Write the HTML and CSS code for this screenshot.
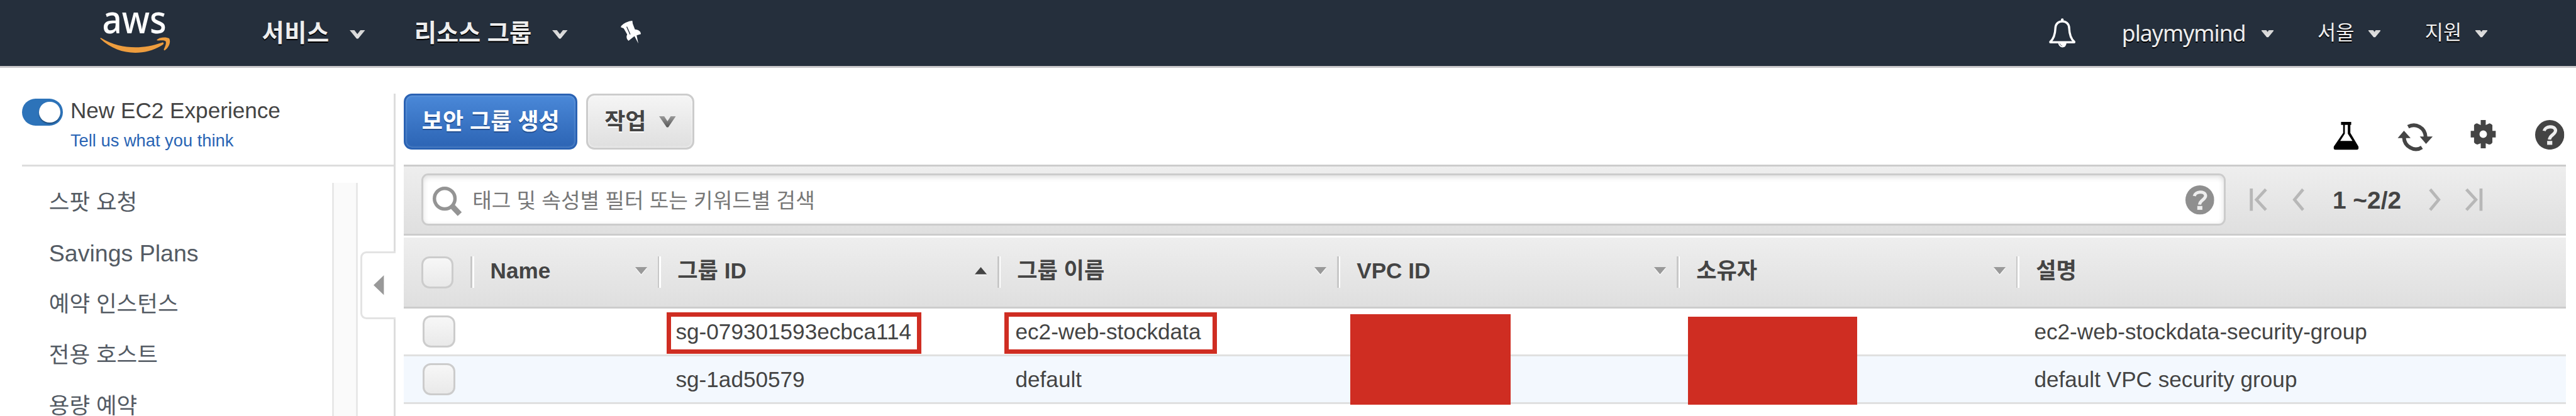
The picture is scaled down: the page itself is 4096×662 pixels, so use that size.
FILE: index.html
```html
<!DOCTYPE html>
<html lang="ko">
<head>
<meta charset="utf-8">
<title>EC2 보안 그룹</title>
<link rel="stylesheet" href="styles.css">
</head>
<body>
<svg class="defs" width="0" height="0" aria-hidden="true">
  <defs>
    <linearGradient id="caret-light" x1="0" y1="0" x2="0" y2="1"><stop offset="0" stop-color="#d2d2d2"/><stop offset="1" stop-color="#e6e6e6"/></linearGradient>
    <linearGradient id="caret-dark" x1="0" y1="0" x2="0" y2="1"><stop offset="0" stop-color="#9a9a9a"/><stop offset="1" stop-color="#555"/></linearGradient>
    <symbol id="caret" viewBox="0 0 36 20" preserveAspectRatio="none"><path d="M0 0H11L18 9L25 0H36L19.500 20H16.500Z"/></symbol>
    <symbol id="caret-small" viewBox="0 0 28 17" preserveAspectRatio="none"><path d="M0 0H11L14 4L17 0H28V2L15.500 17H12.500L0 2Z"/></symbol>
    <symbol id="help" viewBox="0 0 68 68" preserveAspectRatio="none"><ellipse cx="34" cy="34" rx="34" ry="34"/><path d="M21 25C23 14 45 12 47.500 23C49 33 34 34 33.500 45" fill="none" stroke="#eee" stroke-width="7.500"/><rect x="28" y="48" width="12" height="9" fill="#eee"/></symbol>
  </defs>
</svg>
<header class="nav">
  <svg class="logo" viewBox="0 0 163 100">
    <text x="5" y="53.500" font-size="90" textLength="150" lengthAdjust="spacingAndGlyphs">aws</text>
    <path class="smile" d="M1 67C0 65 2 64 4 66C48 92 100 92 144 76C148 74 150 78 146 81C102 109 42 106 1 67Z"/>
    <path class="smile" d="M132 70C138 63 154 62 161 66C166 74 160 88 152 93C150 95 148 94 149 91C152 84 155 77 153 73C149 69 139 71 134 71Z"/>
  </svg>
  <div class="menu menu-services"><span>서비스</span><svg class="caret"><use href="#caret"/></svg></div>
  <div class="menu menu-groups"><span>리소스 그룹</span><svg class="caret"><use href="#caret"/></svg></div>
  <svg class="pin" viewBox="0 0 47 53"><path d="M20 1L27 0L28 7L33 20Q46 21 47 31L37 34L41 53L32 36L18 47Q11 41 15 32L7 18L0 15Q2 7 20 1Z"/><path class="pin-line" d="M14 14L22 32"/></svg>
  <div class="nav-right">
    <svg class="bell" viewBox="0 0 62 68"><path d="M3 55Q14 46 15 23C15 2 47 2 47 23Q48 46 59 55V56H3Z" fill="none" stroke="#fff" stroke-width="5" stroke-linejoin="round"/><path d="M28 6V2Q31 -1 34 2V6ZM21 57H41Q40 68 31 68Q23 67 21 57Z" fill="#fff"/><path d="M25 59Q27 64 31 65" fill="none" stroke="#252f3c" stroke-width="1"/></svg>
    <div class="menu-sm account"><span>playmymind</span><svg class="caret-sm"><use href="#caret-small"/></svg></div>
    <div class="menu-sm region"><span>서울</span><svg class="caret-sm"><use href="#caret-small"/></svg></div>
    <div class="menu-sm support"><span>지원</span><svg class="caret-sm"><use href="#caret-small"/></svg></div>
  </div>
</header>
<div class="page">
  <aside class="sidebar">
    <div class="experience">
      <div class="toggle"><div class="knob"></div></div>
      <div class="experience-text"><div class="experience-title">New EC2 Experience</div><a class="feedback">Tell us what you think</a></div>
    </div>
    <div class="side-body">
      <nav class="side-list"><a>스팟 요청</a><a>Savings Plans</a><a>예약 인스턴스</a><a>전용 호스트</a><a>용량 예약</a></nav>
      <div class="scrollbar"></div>
    </div>
    <div class="collapse"><svg viewBox="0 0 24 46"><path d="M24 0V46L0 23Z"/></svg></div>
  </aside>
  <main class="main">
    <div class="actions">
      <button class="btn btn-primary">보안 그룹 생성</button>
      <button class="btn btn-plain">작업<svg class="caret-btn"><use href="#caret"/></svg></button>
      <div class="tools">
        <svg class="flask" viewBox="0 0 60 66"><path d="M18 0H42V7H40V26L59 58Q61 66 55 66H5Q-1 66 1 58L23 26V7H18ZM27 7V28L16 45H45L34 28V7Z" fill-rule="evenodd"/></svg>
        <svg class="refresh" viewBox="0 0 84 68"><g fill="none" stroke="#444" stroke-width="9"><path d="M25 8.500C43 -1 66 10 67 34"/><path d="M58 58C40 70 16 56 15 34"/></g><path d="M0 36L15 18L31 36ZM53 32H84L68 50Z" fill="#444"/></svg>
        <svg class="gear" viewBox="0 0 60 68"><path fill-rule="evenodd" d="M24 0H36V12L45 8Q49 9 52 12V26H60V42H52V54Q49 59 44 59L36 56V68H24V56L16 59Q11 58 8 54V42H0V26H8V12Q11 8 15 8L24 12ZM30 25A9 9 0 1 0 30 43A9 9 0 1 0 30 25Z"/></svg>
        <svg class="help"><use href="#help"/></svg>
      </div>
    </div>
    <div class="filter">
      <div class="search">
        <svg class="magnifier" viewBox="0 0 70 70"><circle cx="28" cy="28" r="24" fill="none" stroke="#949494" stroke-width="8"/><path d="M45 45L63 64" stroke="#949494" stroke-width="13"/></svg>
        <span class="placeholder">태그 및 속성별 필터 또는 키워드별 검색</span>
        <svg class="search-help"><use href="#help"/></svg>
      </div>
      <svg class="page-end first" viewBox="0 0 42 52"><path d="M4 0V52M38 2L16 26L38 50"/></svg>
      <svg class="page-step" viewBox="0 0 28 52"><path d="M25 2L5 26L25 50"/></svg>
      <span class="range">1 ~2/2</span>
      <svg class="page-step" viewBox="0 0 28 52"><path d="M3 2L23 26L3 50"/></svg>
      <svg class="page-end last" viewBox="0 0 42 52"><path d="M38 0V52M4 2L26 26L4 50"/></svg>
    </div>
    <div class="row head">
      <div class="cell"><div class="check"></div></div>
      <div class="cell">Name<svg class="sort" viewBox="0 0 28 17"><path d="M0 0H28L14 17Z"/></svg></div>
      <div class="cell">그룹 ID<svg class="sort sort-active" viewBox="0 0 28 17"><path d="M0 17H28L14 0Z"/></svg></div>
      <div class="cell">그룹 이름<svg class="sort" viewBox="0 0 28 17"><path d="M0 0H28L14 17Z"/></svg></div>
      <div class="cell">VPC ID<svg class="sort" viewBox="0 0 28 17"><path d="M0 0H28L14 17Z"/></svg></div>
      <div class="cell">소유자<svg class="sort" viewBox="0 0 28 17"><path d="M0 0H28L14 17Z"/></svg></div>
      <div class="cell">설명</div>
    </div>
    <div class="row">
      <div class="cell"><div class="check"></div></div>
      <div class="cell"></div>
      <div class="cell">sg-079301593ecbca114<div class="mark mark-id"></div></div>
      <div class="cell">ec2-web-stockdata<div class="mark mark-name"></div></div>
      <div class="cell"><div class="redact redact-vpc"></div></div>
      <div class="cell"><div class="redact redact-owner"></div></div>
      <div class="cell">ec2-web-stockdata-security-group</div>
    </div>
    <div class="row alt">
      <div class="cell"><div class="check"></div></div>
      <div class="cell"></div>
      <div class="cell">sg-1ad50579</div>
      <div class="cell">default</div>
      <div class="cell"></div>
      <div class="cell"></div>
      <div class="cell">default VPC security group</div>
    </div>
  </main>
</div>
</body>
</html>
```
FILE: styles.css
```css
/* 1rem is one sixtieth of the console's width */
html { font-size: 68.267px; }
* { box-sizing: border-box; }
body {
  margin: 0; width: 60rem; height: 9.7rem; overflow: hidden;
  display: flex; flex-direction: column; background: #fff; color: #444;
  font-family: "Liberation Sans", "Noto Sans CJK KR", sans-serif;
  white-space: nowrap;
}
svg { display: block; flex: none; overflow: visible; }
.defs { position: absolute; }

/* top navigation */
.nav {
  flex: none; height: 1.58rem; display: flex; align-items: flex-start;
  background: #252f3c; border-bottom: 3px solid #cac9cb; padding-left: 2.33rem; color: #eee;
}
.logo { width: 1.63rem; height: 1rem; margin-top: .23rem; }
.logo text { fill: #fff; font-family: "Noto Sans", sans-serif; font-weight: 500; }
.smile { fill: #ee9d3e; }
.menu { display: flex; align-items: center; height: 1.56rem; font-size: .56rem; font-weight: 700; line-height: 1; text-shadow: 0 .035rem 0 #000; }
.menu-services { margin-left: 2.14rem; width: 2.41rem; justify-content: space-between; letter-spacing: .01rem; }
.menu-groups { margin-left: 1.14rem; width: 3.57rem; justify-content: space-between; }
.caret { width: .36rem; height: .2rem; margin-top: .06rem; fill: url(#caret-light); }
.pin { width: .47rem; height: .53rem; margin: .49rem 0 0 1.24rem; fill: #fff; }
.pin-line { fill: none; stroke: #252f3c; stroke-width: 2; }
.nav-right { margin-left: auto; display: flex; padding-right: 2.06rem; }
.bell { width: .62rem; height: .68rem; margin: .43rem 1.08rem 0 0; }
.menu-sm { display: flex; align-items: center; justify-content: space-between; height: 1.54rem; font-size: .465rem; line-height: 1; text-shadow: 0 .035rem 0 #000; }
.account { width: 3.53rem; font-family: "Noto Sans", sans-serif; font-size: .52rem; letter-spacing: -.014rem; }
.region { margin-left: 1.03rem; width: 1.47rem; }
.support { margin-left: 1.03rem; width: 1.46rem; }
.caret-sm { width: .28rem; height: .17rem; margin-top: .05rem; fill: url(#caret-light); }

/* sidebar */
.page { flex: 1; min-height: 0; display: flex; padding-top: .6rem; }
.sidebar { position: relative; flex: none; width: 9.22rem; height: 7.52rem; border-right: 3px solid #ddd; padding-left: .52rem; }
.experience { display: flex; height: 1.7rem; border-bottom: 3px solid #ddd; }
.toggle { width: .94rem; height: .63rem; margin-top: .12rem; border-radius: .32rem; background: #2d73b9; padding: .07rem .06rem; display: flex; justify-content: flex-end; }
.knob { width: .49rem; height: .49rem; border-radius: 50%; background: #fff; box-shadow: 0 .03rem .03rem #1d4d7e; }
.experience-text { padding: .14rem 0 0 .18rem; }
.experience-title { font-size: .515rem; line-height: .54rem; }
.feedback { display: block; margin-top: .16rem; font-size: .4rem; line-height: .54rem; color: #2964b4; }
.side-body { display: flex; justify-content: space-between; height: 5.82rem; padding-right: .84rem; }
.side-list { display: flex; flex-direction: column; padding: .25rem 0 0 .62rem; color: #545b64; }
.side-list a { flex: none; height: 1.187rem; line-height: 1.187rem; font-size: .52rem; }
.side-list a:nth-child(2) { font-size: .55rem; }
.scrollbar { width: .6rem; margin-top: .39rem; background: #fafafa; border: solid #e8e8e8; border-width: 0 3px; }
.collapse {
  position: absolute; left: 8.39rem; top: 3.68rem; width: .83rem; height: 1.58rem;
  background: #fff; border: 3px solid #e3e3e3; border-right: 0; border-radius: .14rem 0 0 .14rem;
  display: flex; align-items: center; padding-left: .27rem;
}
.collapse svg { width: .24rem; height: .46rem; fill: #999; }

/* actions */
.main { flex: none; width: 50.36rem; margin-left: .19rem; }
.actions { display: flex; height: 1.66rem; }
.btn {
  height: 1.31rem; margin: 0; padding: 0; display: flex; align-items: center; justify-content: center;
  border-radius: .19rem; font: 700 .528rem/1 "Liberation Sans", "Noto Sans CJK KR", sans-serif;
}
.btn-primary { width: 4.04rem; color: #fff; border: 3px solid #2a62b3; background: linear-gradient(#4a88d8, #2c64b4); box-shadow: inset 0 0 .05rem #85aede; text-shadow: 0 .035rem 0 #234f91; }
.btn-plain { width: 2.52rem; margin-left: .2rem; color: #444; border: 3px solid #ccc; background: linear-gradient(#f5f5f5, #dfdfdf); box-shadow: inset 0 0 .05rem #fff; text-shadow: 0 .035rem 0 #fff; }
.caret-btn { width: .39rem; height: .26rem; margin-left: .3rem; fill: url(#caret-dark); }
.tools { margin-left: auto; display: flex; padding: .62rem .04rem 0 0; }
.flask { width: .6rem; height: .65rem; margin: .035rem .89rem 0 0; fill: #000; }
.refresh { width: .83rem; height: .66rem; margin: .07rem .87rem 0 0; }
.gear { width: .6rem; height: .66rem; margin-right: .91rem; fill: #444; }
.help { width: .68rem; height: .69rem; fill: #444; }

/* filter bar */
.filter {
  display: flex; height: 1.66rem; padding: .16rem 0 0 .4rem;
  border: solid #ccc; border-width: 3px 0; background: linear-gradient(#eee, #dfdfdf);
}
.search {
  display: flex; width: 42.03rem; height: 1.22rem; padding: .26rem .23rem 0 .22rem;
  background: #fff; border: 3px solid #ccc; border-radius: .16rem; box-shadow: inset 0 .04rem .12rem #ddd;
}
.magnifier { width: .7rem; height: .7rem; }
.placeholder { margin-left: .23rem; font-size: .487rem; line-height: .66rem; color: #777; }
.search-help { margin: -.03rem 0 0 auto; width: .67rem; height: .68rem; fill: #8f8f8f; }
.filter > svg { height: .52rem; margin-top: .35rem; fill: none; stroke: #b7b7b7; stroke-width: 7; }
.page-end { width: .42rem; }
.page-step { width: .28rem; }
.filter > .first { margin: .35rem .58rem 0 .56rem; }
.filter > .last { margin-left: .55rem; }
.range { width: 1.99rem; margin: .28rem .28rem 0 .65rem; font-size: .57rem; font-weight: 700; line-height: .7rem; }
.range + .page-step { margin-left: -.02rem; }

/* table */
.row {
  display: grid; grid-template-columns: 1.55rem 4.36rem repeat(4, 7.91rem) 1fr;
  height: 1.11rem; border-bottom: 3px solid #e0e0e0; font-size: .515rem; line-height: 1;
}
.row.alt { background: #f3f8fe; }
.row.head { height: 1.7rem; border-top: 3px solid #fff; border-bottom: 3px solid #ccc; background: linear-gradient(#eee, #dfdfdf) padding-box; font-weight: 700; }
.cell { position: relative; display: flex; align-items: center; padding-left: .42rem; }
.head .cell { padding: 0 .24rem .09rem .46rem; justify-content: space-between; }
.head .cell + .cell::before {
  content: ""; position: absolute; left: 0; top: .44rem; width: .08rem; height: .72rem;
  background: linear-gradient(90deg, #c8c8c8 50%, #fff 50%);
}
.cell:first-child { padding-left: .44rem; }
.head .cell:first-child { padding: 0 0 0 .4rem; }
.check { width: .75rem; height: .75rem; border: 3px solid #ccc; border-radius: .19rem; background: linear-gradient(#f7f7f7, #e9e9e9); }
.sort { width: .28rem; height: .17rem; fill: #999; filter: drop-shadow(0 .03rem 0 #f6f6f6); }
.sort-active { fill: #444; }

/* annotations over the rows */
.mark { position: absolute; top: .08rem; height: .97rem; border: 7px solid #cf2d22; }
.mark-id { left: .21rem; width: 5.93rem; }
.mark-name { left: .16rem; width: 4.95rem; }
.redact { position: absolute; background: #cf2d22; z-index: 1; }
.redact-vpc { left: .31rem; top: .13rem; width: 3.73rem; height: 2.1rem; }
.redact-owner { left: .27rem; top: .19rem; width: 3.94rem; height: 2.04rem; }
```
